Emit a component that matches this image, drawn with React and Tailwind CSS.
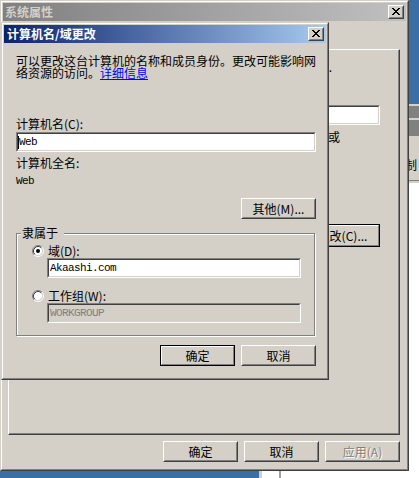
import React from 'react';

const cjk = "font-['Noto_Sans_CJK_SC','Noto_Sans',sans-serif]";
const mono = "font-['Liberation_Mono','Noto_Sans_CJK_SC',monospace] text-[11px] leading-[12px] tracking-[-0.6px]";

// 8x7 classic close glyph, drawn pixel by pixel
const CloseGlyph = () => (
  <svg width="8" height="7" viewBox="0 0 8 7" shapeRendering="crispEdges" className="block">
    <path
      fill="#000"
      d="M0 0h2v1H0z M6 0h2v1H6z M1 1h2v1H1z M5 1h2v1H5z M2 2h4v1H2z M3 3h2v1H3z M2 4h4v1H2z M1 5h2v1H1z M5 5h2v1H5z M0 6h2v1H0z M6 6h2v1H6z"
    />
  </svg>
);

const CloseButton = () => (
  <div className="w-[16px] h-[14px] bg-[#d4d0c8] border border-t-white border-l-white border-r-[#404040] border-b-[#404040]">
    <div className="h-full border border-transparent border-r-[#808080] border-b-[#808080] pl-[2px] pt-[1px]">
      <CloseGlyph />
    </div>
  </div>
);

const Button = ({ label, className = '', isDefault = false, disabled = false }) => {
  const text = disabled ? 'text-[#808080] [text-shadow:1px_1px_0_#ffffff]' : 'text-black';
  if (isDefault) {
    return (
      <div className={`border border-black ${className}`}>
        <div className={`h-full border border-t-white border-l-white border-r-[#808080] border-b-[#808080] flex items-center justify-center text-[12px] leading-[12px] whitespace-nowrap ${text}`}>
          {label}
        </div>
      </div>
    );
  }
  return (
    <div className={`border border-t-white border-l-white border-r-[#404040] border-b-[#404040] ${className}`}>
      <div className={`h-full border border-transparent border-r-[#808080] border-b-[#808080] flex items-center justify-center text-[12px] leading-[12px] whitespace-nowrap ${text}`}>
        {label}
      </div>
    </div>
  );
};

// sunken edit box
const Field = ({ className = '', bg = 'bg-white', children }) => (
  <div className={`border border-t-[#808080] border-l-[#808080] border-r-white border-b-white ${className}`}>
    <div className={`h-full border border-t-[#404040] border-l-[#404040] border-r-[#d4d0c8] border-b-[#d4d0c8] flex items-center overflow-hidden ${bg}`}>
      {children}
    </div>
  </div>
);

const Radio = ({ checked }) => (
  <svg width="12" height="12" viewBox="0 0 12 12" className="block shrink-0">
    <circle cx="6" cy="6" r="4.5" fill="#fff" />
    <path d="M2.11 9.89A5.5 5.5 0 0 1 9.89 2.11" fill="none" stroke="#808080" />
    <path d="M9.89 2.11A5.5 5.5 0 0 1 2.11 9.89" fill="none" stroke="#fff" />
    <path d="M2.82 9.18A4.5 4.5 0 0 1 9.18 2.82" fill="none" stroke="#404040" />
    <path d="M9.18 2.82A4.5 4.5 0 0 1 2.82 9.18" fill="none" stroke="#d4d0c8" />
    {checked && <circle cx="6" cy="6" r="2" fill="#000" />}
  </svg>
);

const SystemProperties = () => (
  <div className="absolute left-0 top-0 w-[409px] h-[471px] bg-[#d4d0c8] border border-t-[#d4d0c8] border-l-[#d4d0c8] border-r-[#404040] border-b-[#404040]">
    <div className="h-full border border-t-white border-l-white border-r-[#808080] border-b-[#808080] p-[1px] flex flex-col">
      {/* inactive title bar */}
      <div className="h-[18px] shrink-0 bg-[linear-gradient(to_right,#808080,#c0c0c0)] flex items-center justify-between pl-[2px] pr-[2px]">
        <span className="text-[12px] leading-[12px] font-bold text-[#d4d0c8]">系统属性</span>
        <CloseButton />
      </div>

      {/* tab page, mostly hidden behind the front dialog */}
      <div className="ml-[5px] mt-[28px] w-[392px] h-[386px] shrink-0 border border-t-white border-l-white border-r-[#404040] border-b-[#404040] shadow-[inset_-1px_-1px_0_#808080] flex flex-col">
        <div className="mt-[11px] flex justify-end pr-[67px] text-[12px] leading-[12px] whitespace-nowrap">
          例如：“Accounting Server”.
        </div>
        <div className="mt-[32px] flex justify-end pr-[19px]">
          <Field className="w-[270px] h-[20px]" />
        </div>
        <div className="mt-[6px] flex justify-end pr-[59px] text-[12px] leading-[12px] whitespace-nowrap">
          要重命名这台计算机或
        </div>
        <div className="mt-[81px] flex justify-end pr-[19px]">
          <Button isDefault label="更改(C)..." className="w-[75px] h-[23px]" />
        </div>
      </div>

      <div className="mt-[6px] flex justify-end gap-[6px] pr-[6px]">
        <Button label="确定" className="w-[75px] h-[21px]" />
        <Button label="取消" className="w-[75px] h-[21px]" />
        <Button label="应用(A)" disabled className="w-[75px] h-[21px]" />
      </div>
    </div>
  </div>
);

const ComputerNameDialog = () => (
  <div className="absolute left-[1px] top-[22px] w-[328px] h-[358px] bg-[#d4d0c8] border border-t-[#d4d0c8] border-l-[#d4d0c8] border-r-[#404040] border-b-[#404040]">
    <div className="h-full border border-t-white border-l-white border-r-[#808080] border-b-[#808080] p-[1px] flex flex-col">
      <div className="h-[18px] shrink-0 bg-[linear-gradient(to_right,#0a246a,#a6caf0)] flex items-center justify-between pl-[3px] pr-[2px]">
        <span className="text-[12px] leading-[12px] font-bold text-white">计算机名/域更改</span>
        <CloseButton />
      </div>

      <div className="flex flex-col items-start pl-[12px] text-[12px] leading-[12px] text-black">
        <p className="mt-[12px] whitespace-nowrap">
          可以更改这台计算机的名称和成员身份。更改可能影响网
          <br />
          络资源的访问。<span className="text-[#0000ff] underline">详细信息</span>
        </p>

        <div className="mt-[39px]">计算机名(C):</div>
        <Field className="mt-[2px] w-[300px] h-[20px]">
          <div className="w-px h-[13px] bg-black shrink-0" />
          <span className={mono}>Web</span>
        </Field>

        <div className="mt-[5px]">计算机全名:</div>
        <div className={`mt-[6px] ${mono}`}>Web</div>

        <div className="mt-[11px] w-[300px] flex justify-end">
          <Button label="其他(M)..." className="w-[75px] h-[21px]" />
        </div>

        {/* 隶属于 group box */}
        <div className="relative mt-[14px] w-[299px] h-[103px] border border-[#808080] shadow-[inset_1px_1px_0_#ffffff,1px_1px_0_#ffffff] pl-[15px] pt-[11px]">
          <span className="absolute left-[4px] -top-[7px] bg-[#d4d0c8] pl-[1px] pr-[6px]">隶属于</span>
          <div className="flex items-center gap-[4px] h-[12px]">
            <Radio checked />
            <span>域(D):</span>
          </div>
          <Field className="mt-[1px] ml-[15px] w-[254px] h-[20px]">
            <span className={`pl-[1px] ${mono}`}>Akaashi.com</span>
          </Field>
          <div className="mt-[12px] flex items-center gap-[4px] h-[12px]">
            <Radio />
            <span>工作组(W):</span>
          </div>
          <Field className="mt-[1px] ml-[15px] w-[254px] h-[20px]" bg="bg-[#d4d0c8]">
            <span className={`pl-[1px] text-[#808080] ${mono}`}>WORKGROUP</span>
          </Field>
        </div>

        <div className="mt-[9px] w-[300px] flex justify-end gap-[6px]">
          <Button isDefault label="确定" className="w-[75px] h-[21px]" />
          <Button label="取消" className="w-[75px] h-[21px]" />
        </div>
      </div>
    </div>
  </div>
);

// window peeking out behind on the right and bottom edges
const OtherWindow = () => (
  <div className="absolute left-[259px] top-[104px] w-[200px] h-[400px] bg-white flex">
    <div className="w-[3px] bg-[#d4d0c8]" />
    <div className="w-[19px] bg-white border-r-2 border-[#a0a0a0]" />
    <div className="flex-1 flex flex-col">
      <div className="h-[2px] bg-[#d4d0c8]" />
      <div className="h-[12px] bg-[#808080]" />
      <div className="h-[2px] bg-[#d4d0c8]" />
      <div className="h-[16px] bg-[#808080]" />
      <div className="h-[2px] bg-[#d4d0c8]" />
      <div className="h-[42px] bg-[#d4d0c8] pl-[124px] pt-[21px] text-[12px] leading-[12px] whitespace-nowrap">制</div>
      <div className="h-px bg-[#808080]" />
      <div className="h-[2px] bg-[#d4d0c8]" />
    </div>
  </div>
);

export default function App() {
  return (
    <div className={`relative w-[419px] h-[478px] overflow-hidden bg-[#3a6ea5] ${cjk}`}>
      <OtherWindow />
      <SystemProperties />
      <ComputerNameDialog />
    </div>
  );
}
